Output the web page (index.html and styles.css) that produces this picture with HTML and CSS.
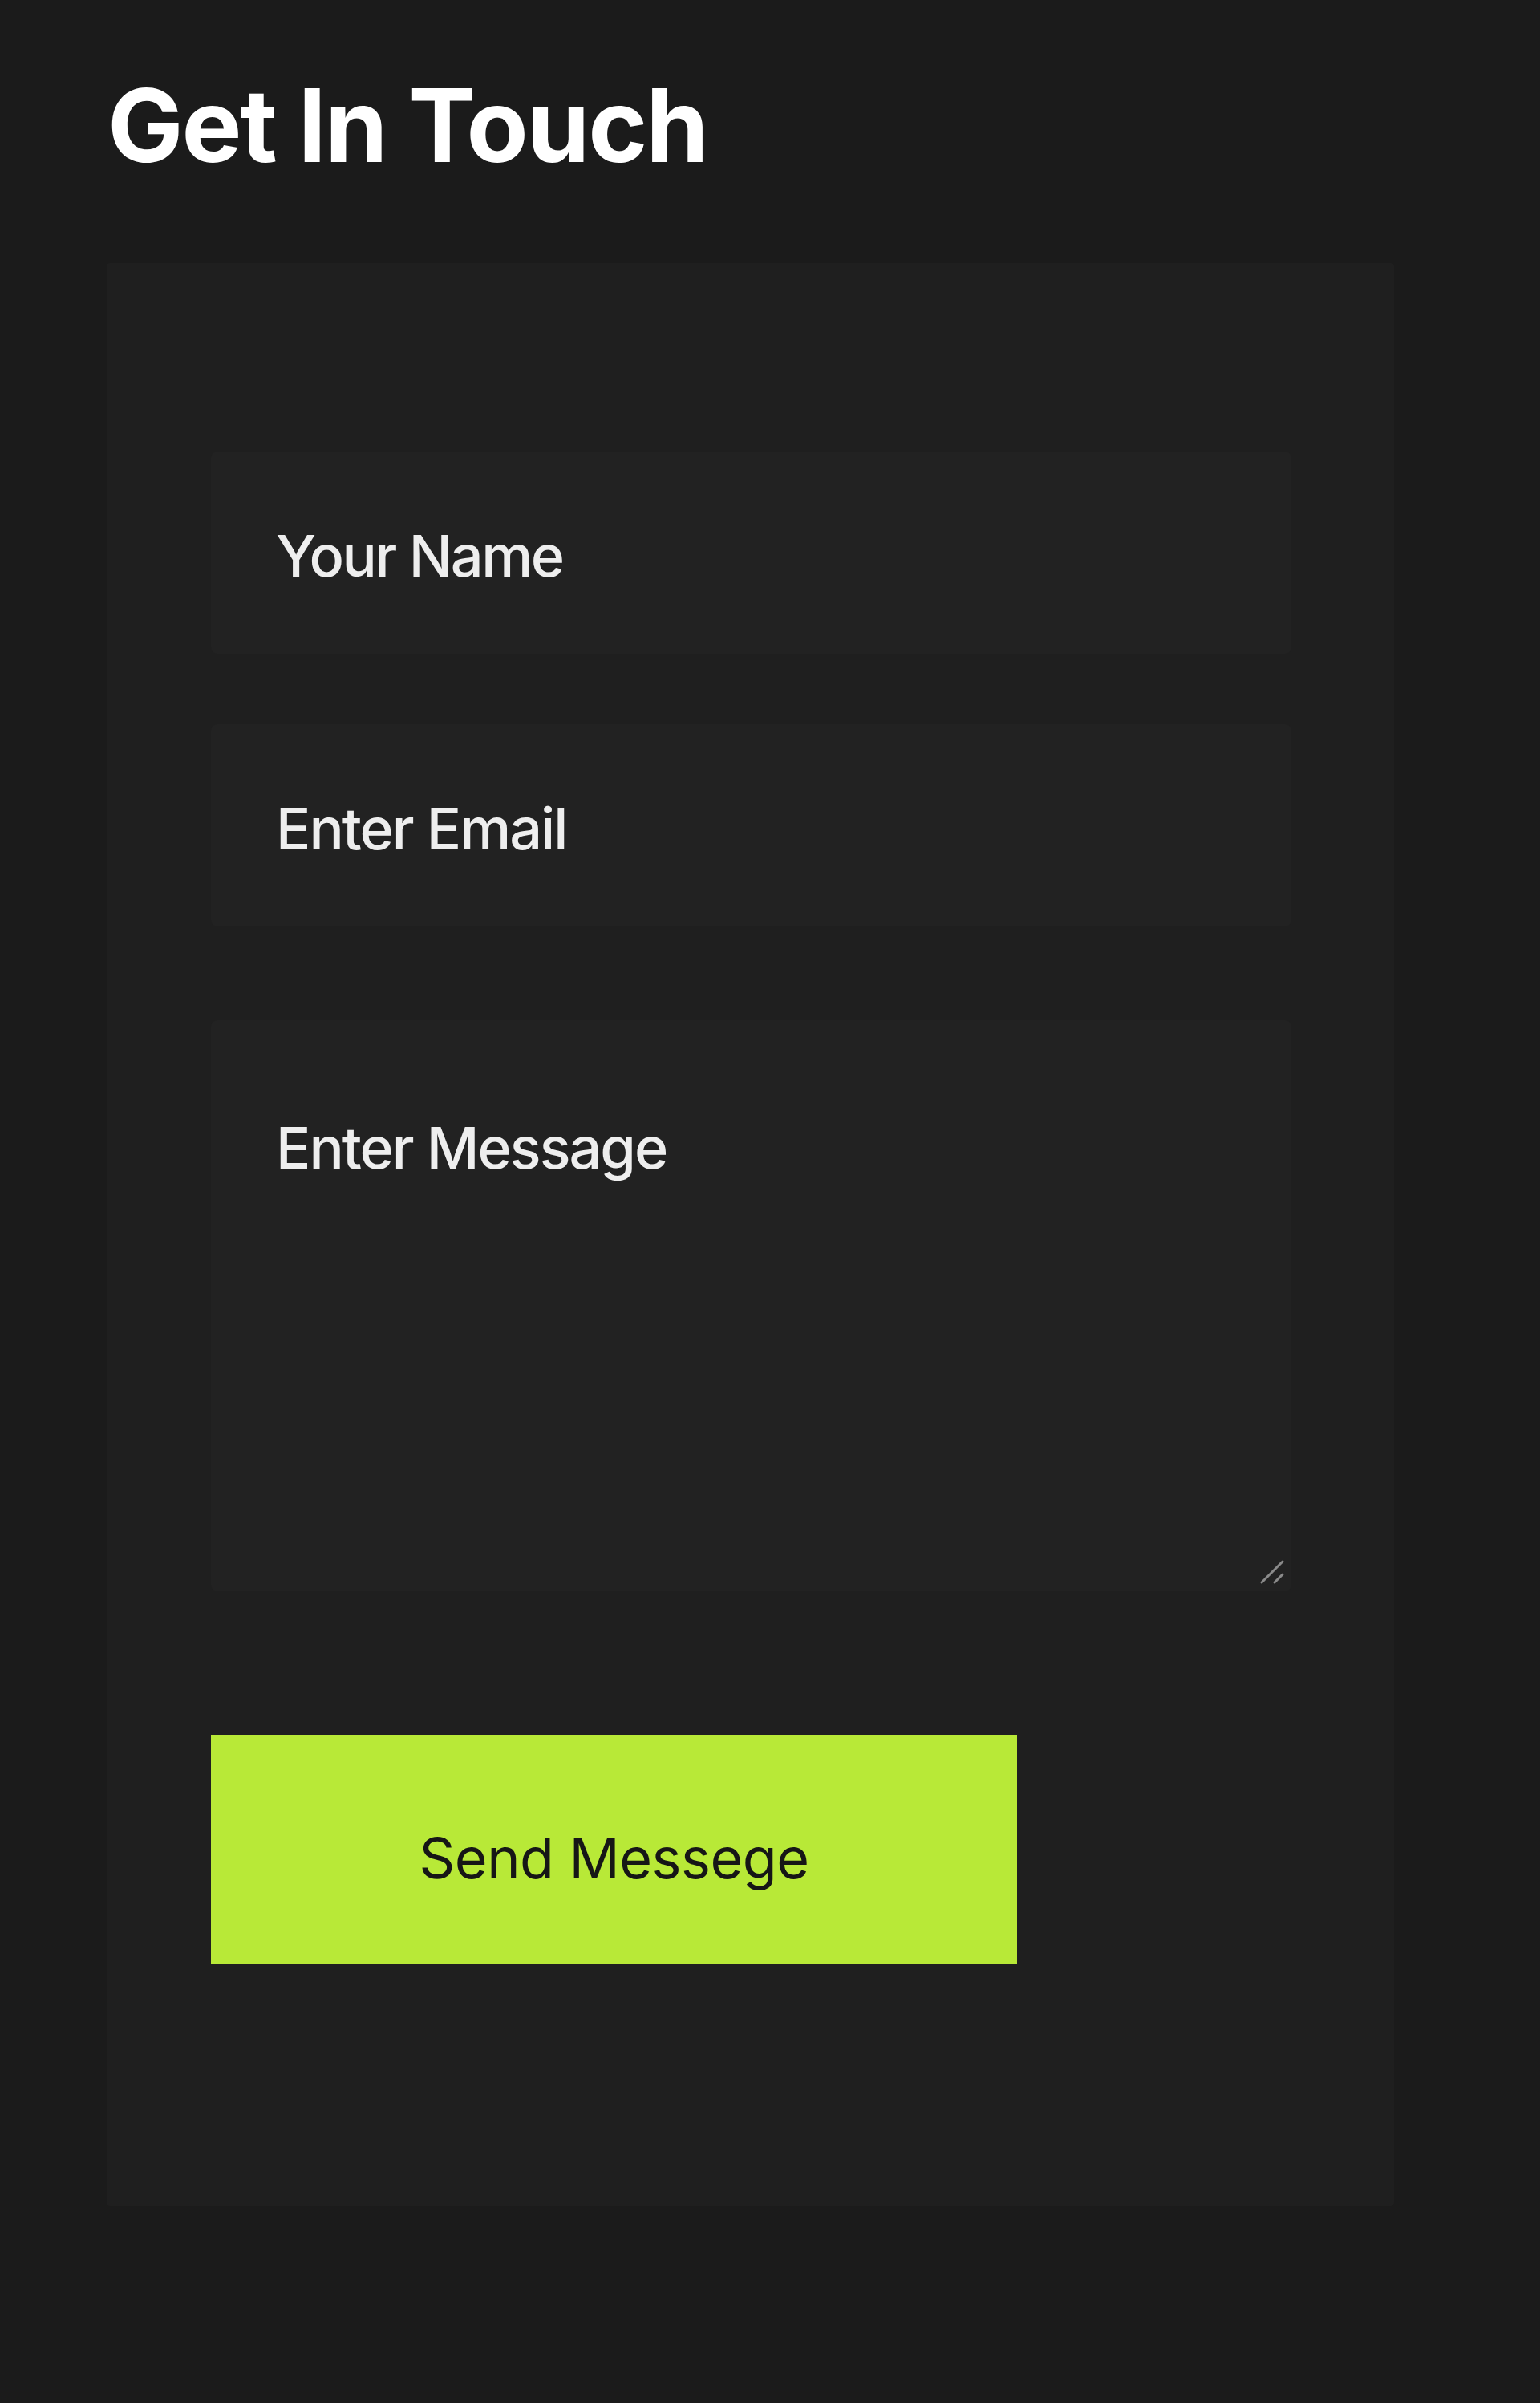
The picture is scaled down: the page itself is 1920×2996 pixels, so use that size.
FILE: index.html
```html
<!DOCTYPE html>
<html lang="en">
<head>
<meta charset="utf-8">
<title>Get In Touch</title>
<link rel="stylesheet" href="styles.css">
</head>
<body>
<main class="page">
  <h1 class="title">Get In Touch</h1>
  <form class="card" onsubmit="return false">
    <input class="field" type="text" placeholder="Your Name">
    <input class="field field-email" type="email" placeholder="Enter Email">
    <div class="message-wrap">
      <textarea class="field field-message" placeholder="Enter Message"></textarea>
      <svg class="grip" width="32" height="32" viewBox="0 0 32 32" aria-hidden="true">
        <line x1="3" y1="29" x2="29" y2="3" />
        <line x1="19" y1="29" x2="29" y2="19" />
      </svg>
    </div>
    <button class="send" type="submit">Send Messege</button>
  </form>
</main>
</body>
</html>
```

FILE: styles.css
```css
html, body {
  margin: 0;
  padding: 0;
  background: #1b1b1b;
}

body {
  font-family: Inter, "Open Sans", "Liberation Sans", sans-serif;
  min-height: 2996px;
}

.page {
  padding: 93px 0 0 134px;
}

.title {
  margin: 0;
  font-size: 126px;
  line-height: 1;
  font-weight: 700;
  color: #ffffff;
  letter-spacing: -2px;
}

.card {
  box-sizing: border-box;
  width: 1605px;
  margin: 109px 0 0 -1px;
  padding: 235px 128px 301px 130px;
  background: #1f1f1f;
  border-radius: 4px;
  display: flex;
  flex-direction: column;
}

.field {
  box-sizing: border-box;
  display: block;
  width: 100%;
  height: 252px;
  margin: 0;
  padding: 6px 40px 0 81px;
  border: none;
  outline: none;
  border-radius: 8px;
  background: #222222;
  color: #eeeeee;
  font-family: Inter, "Open Sans", "Liberation Sans", sans-serif;
  font-size: 72px;
  font-weight: 500;
  letter-spacing: -2.4px;
}

.field::placeholder {
  color: #eeeeee;
  opacity: 1;
}

.field-email {
  margin-top: 88px;
  letter-spacing: -2px;
}

.message-wrap {
  position: relative;
  margin-top: 117px;
}

.field-message {
  height: 712px;
  padding-top: 116px;
  resize: none;
  line-height: 1.2;
  letter-spacing: -2px;
}

.grip {
  position: absolute;
  right: 8px;
  bottom: 8px;
  stroke: #8a8a8a;
  stroke-width: 3;
  stroke-linecap: round;
}

.send {
  box-sizing: border-box;
  width: 1005px;
  height: 286px;
  margin-top: 179px;
  padding: 20px 0 0;
  border: none;
  border-radius: 0;
  background: #b8e937;
  color: #161616;
  font-family: Inter, "Open Sans", "Liberation Sans", sans-serif;
  font-size: 70px;
  font-weight: 400;
  letter-spacing: -0.5px;
  cursor: pointer;
}
```
